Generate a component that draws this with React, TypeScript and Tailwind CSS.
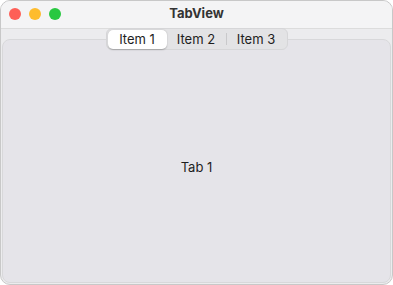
import React, { useState } from "react";

const tabs = ["Item 1", "Item 2", "Item 3"];

export default function App() {
  const [active, setActive] = useState(0);

  return (
    <div
      className="w-[393px] h-[285px] overflow-hidden rounded-[10px] border border-[#c8c8c8] bg-[#ececee] flex flex-col"
      style={{ fontFamily: "Inter, 'Liberation Sans', sans-serif" }}
    >
      {/* title bar */}
      <div className="relative h-[28px] shrink-0 flex items-center justify-center bg-[#f4f4f5] border-b border-[#dcdcdc]">
        <div className="absolute left-[8px] top-[7px] flex gap-[8px]">
          <span className="w-[12px] h-[12px] rounded-full bg-[#fe5f57]" />
          <span className="w-[12px] h-[12px] rounded-full bg-[#febc2e]" />
          <span className="w-[12px] h-[12px] rounded-full bg-[#28c840]" />
        </div>
        <span className="text-[13px] font-bold text-[#333333] -mt-[1px]">TabView</span>
      </div>

      {/* content */}
      <div className="relative flex-1 flex flex-col px-[1px] pb-[1px]">
        <div className="absolute left-1/2 -translate-x-1/2 top-[-1px] z-10 flex items-center h-[22px] p-[1px] rounded-[6px] bg-[#e3e3e5] border border-[#d6d6d8]">
          {tabs.map((t, i) => (
            <React.Fragment key={t}>
              {i === 2 && active !== 1 && active !== 2 ? (
                <span className="w-px h-[12px] bg-[#c9c9cb]" />
              ) : i === 2 ? (
                <span className="w-px h-[12px] bg-transparent" />
              ) : null}
              <button
                onClick={() => setActive(i)}
                className={
                  i === active
                    ? "h-[19px] w-[59px] rounded-[5px] bg-white shadow-[0_0.5px_1.5px_rgba(0,0,0,0.25)] text-[13px] text-[#1e1e1e]"
                    : "h-[19px] w-[59px] rounded-[5px] text-[13px] text-[#1e1e1e]"
                }
              >
                {t}
              </button>
            </React.Fragment>
          ))}
        </div>
        <div className="mt-[10px] flex-1 rounded-[8px] border border-[#d8d8da] bg-[#e5e4e9] flex items-center justify-center pt-[14px]">
          <span className="text-[13px] text-[#1e1e1e]">Tab {active + 1}</span>
        </div>
      </div>
    </div>
  );
}
